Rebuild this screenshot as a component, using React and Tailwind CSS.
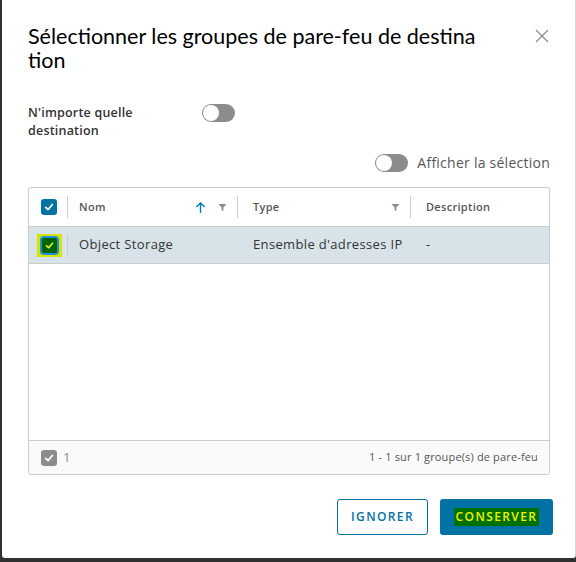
import React from 'react';

const font = { fontFamily: '"Open Sans", Lato, sans-serif' };
const titleFont = { fontFamily: 'Lato, "Open Sans", sans-serif' };

const Check = ({ className = 'w-[10px] h-[10px]' }) => (
  <svg viewBox="0 0 12 12" className={className}>
    <polyline points="2,6.5 5,9 10,3" fill="none" stroke="currentColor" strokeWidth="2.2" strokeLinecap="round" strokeLinejoin="round" />
  </svg>
);

const Toggle = () => (
  <div className="w-[33px] h-[18px] rounded-full bg-[#8c8c8c] flex items-center px-[1px]">
    <div className="w-[16px] h-[16px] rounded-full bg-white" />
  </div>
);

const Funnel = () => (
  <svg viewBox="0 0 10 10" className="w-[9px] h-[9px] text-[#8c8c8c]">
    <path d="M0.5 1 H9.5 L6 5 V9 L4 8 V5 Z" fill="currentColor" />
  </svg>
);

const ArrowUp = () => (
  <svg viewBox="0 0 12 14" className="w-[11px] h-[13px] text-[#0079b8]">
    <path d="M6 13 V2 M1.5 6.5 L6 2 L10.5 6.5" fill="none" stroke="currentColor" strokeWidth="1.5" />
  </svg>
);

export default function App() {
  return (
    <div className="w-[576px] h-[562px] bg-[#313131] pl-[2px] pb-[4px]" style={font}>
      <div className="w-[574px] h-[558px] bg-white rounded-b-[3px] border-r border-[#d6d6d6] pl-[26px] pr-[24px] pt-[24px] flex flex-col">
        {/* Header */}
        <div className="flex items-start justify-between">
          <h2 className="text-[21.5px] leading-[24px] text-[#000] font-normal" style={titleFont}>
            Sélectionner les groupes de pare-feu de destina
            <br />
            tion
          </h2>
          <button className="mt-[5px] mr-[2px] text-[#8c8c8c]">
            <svg viewBox="0 0 14 14" className="w-[14px] h-[14px]">
              <path d="M1 1 L13 13 M13 1 L1 13" stroke="currentColor" strokeWidth="1.3" />
            </svg>
          </button>
        </div>

        {/* Any destination */}
        <div className="flex items-start mt-[32px]">
          <div className="w-[174px] text-[12.5px] leading-[18px] font-semibold text-[#333] tracking-[0.2px]">
            N'importe quelle
            <br />
            destination
          </div>
          <Toggle />
        </div>

        {/* Show selection */}
        <div className="flex items-center justify-end gap-[9px] mt-[12px] pr-[1px]">
          <Toggle />
          <span className="text-[14px] text-[#565656] tracking-[0.25px]">Afficher la sélection</span>
        </div>

        {/* Table */}
        <div className="mt-[14px] w-[522px] h-[288px] border border-[#cccccc] rounded-[3px] flex flex-col overflow-hidden">
          <div className="h-[39px] flex items-center border-b border-[#cccccc] text-[11px] font-semibold text-[#565656] tracking-[0.3px]">
            <div className="w-[38px] h-full flex items-center pl-[12px]">
              <div className="w-[16px] h-[16px] rounded-[3px] bg-[#0072a3] text-white flex items-center justify-center">
                <Check />
              </div>
            </div>
            <div className="w-px h-[22px] bg-[#cccccc]" />
            <div className="w-[169px] flex items-center pl-[11px] pr-[10px]">
              <span className="flex-1">Nom</span>
              <ArrowUp />
              <span className="ml-[12px]"><Funnel /></span>
            </div>
            <div className="w-px h-[22px] bg-[#cccccc]" />
            <div className="w-[172px] flex items-center pl-[15px] pr-[10px]">
              <span className="flex-1">Type</span>
              <Funnel />
            </div>
            <div className="w-px h-[22px] bg-[#cccccc]" />
            <div className="flex-1 pl-[15px]">Description</div>
          </div>

          <div className="h-[37px] flex items-center bg-[#d8e3e9] border-b border-[#cccccc] text-[13px] text-[#333] tracking-[0.35px]">
            <div className="w-[38px] h-full flex items-center pl-[8px]">
              <div className="w-[25px] h-[23px] bg-[#d4e600] flex items-center justify-center">
                <div className="w-[19px] h-[19px] rounded-[4px] border-[2px] border-[#1f8fe0] bg-[#006400] text-[#e8f000] flex items-center justify-center">
                  <Check className="w-[9px] h-[9px]" />
                </div>
              </div>
            </div>
            <div className="w-px h-[22px] bg-[#c3cfd6]" />
            <div className="w-[169px] pl-[11px]">Object Storage</div>
            <div className="w-px" />
            <div className="w-[172px] pl-[15px]">Ensemble d'adresses IP</div>
            <div className="w-px" />
            <div className="flex-1 pl-[15px]">-</div>
          </div>

          <div className="flex-1" />

          <div className="h-[34px] bg-[#fafafa] border-t border-[#cccccc] flex items-center pl-[12px] pr-[11px]">
            <div className="w-[16px] h-[16px] rounded-[3px] bg-[#8c8c8c] text-white flex items-center justify-center">
              <Check />
            </div>
            <span className="ml-[6px] text-[13px] text-[#8c8c8c]">1</span>
            <span className="ml-auto text-[11px] text-[#565656] tracking-[0.15px]">1 - 1 sur 1 groupe(s) de pare-feu</span>
          </div>
        </div>

        {/* Footer buttons */}
        <div className="flex justify-end gap-[12px] mt-[24px] mr-[-2px]">
          <button className="w-[91px] h-[36px] rounded-[3px] border border-[#0072a3] text-[#0072a3] text-[12px] font-semibold tracking-[1.4px]">
            IGNORER
          </button>
          <button className="w-[113px] h-[36px] rounded-[3px] bg-[#0072a3] text-[12px] font-semibold tracking-[1.4px] flex items-center justify-center">
            <span className="bg-[#007000] text-[#f2f200] px-[2px] py-[1px] leading-[16px]">CONSERVER</span>
          </button>
        </div>
      </div>
    </div>
  );
}
